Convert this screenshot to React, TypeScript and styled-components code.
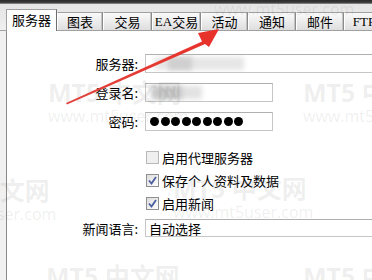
import React from "react";
import styled, { createGlobalStyle } from "styled-components";

const GlobalStyle = createGlobalStyle`
  html, body {
    margin: 0;
    padding: 0;
    background: #f0f0f0;
  }
  body {
    font-family: "Noto Sans CJK SC", "DejaVu Sans", sans-serif;
    font-size: 13px;
    color: #000;
  }
`;

/* -------------------- WINDOW / TABS -------------------- */
const Window = styled.div`
  position: relative;
  width: 372px;
  height: 280px;
  overflow: hidden;
  background: #f0f0f0;
  display: flex;
  flex-direction: column;
`;

const TitleEdge = styled.div`
  height: 4px;
  background: linear-gradient(to bottom, #2a2a2a 0%, #3a3a3a 60%, #9a9a9a 100%);
`;

const TabStrip = styled.div`
  height: 26px;
  display: flex;
  align-items: flex-end;
  padding-left: 6px;
  border-bottom: 1px solid #a0a0a0;
  background: linear-gradient(to bottom, #e4e4e4, #f0f0f0);
`;

const Tab = styled.div<{ $w: number; $active?: boolean }>`
  box-sizing: border-box;
  width: ${(p) => p.$w}px;
  flex: none;
  height: ${(p) => (p.$active ? 22 : 18)}px;
  margin-bottom: ${(p) => (p.$active ? -1 : 0)}px;
  display: flex;
  align-items: center;
  justify-content: center;
  line-height: 1;
  font-size: 13px;
  white-space: nowrap;
  background: ${(p) =>
    p.$active ? "#ffffff" : "linear-gradient(to bottom, #fafafa, #dedede)"};
  border-top: 1px solid #a0a0a0;
  border-left: 1px solid ${(p) => (p.$active ? "#a0a0a0" : "#ffffff")};
  border-right: 1px solid ${(p) => (p.$active ? "#6e6e6e" : "#8a8a8a")};
  box-shadow: ${(p) => (p.$active ? "none" : "inset -1px 0 0 #c4c4c4")};
  padding-bottom: ${(p) => (p.$active ? 3 : 0)}px;
`;

const Latin = styled.span`
  font-family: "Liberation Serif", serif;
  font-size: 13px;
`;

const Panel = styled.div`
  flex: 1;
  margin-left: 6px;
  border-left: 1px solid #8a8a8a;
  background: #ffffff;
  padding-top: 23px;
  display: flex;
  flex-direction: column;
`;

/* -------------------- FORM -------------------- */
const Row = styled.div<{ $top: number; $h: number }>`
  display: flex;
  align-items: center;
  margin-top: ${(p) => p.$top}px;
  height: ${(p) => p.$h}px;
  white-space: nowrap;
`;

const Label = styled.div`
  width: 131px;
  text-align: right;
  padding-right: 7px;
  flex: none;
`;

const Field = styled.div<{ $w: number }>`
  position: relative;
  box-sizing: border-box;
  width: ${(p) => p.$w}px;
  height: 100%;
  flex: none;
  border: 1px solid #c6c6c6;
  border-top-color: #b0b0b0;
  background: #fff;
  display: flex;
  align-items: center;
  padding-left: 3px;
  overflow: hidden;
`;

const Smudge = styled.div<{ $x: number; $w: number; $c: string }>`
  position: absolute;
  left: ${(p) => p.$x}px;
  top: 2px;
  width: ${(p) => p.$w}px;
  height: 13px;
  background: ${(p) => p.$c};
  filter: blur(2.5px);
`;

const Dots = styled.div`
  display: flex;
  gap: 1.5px;
  padding-left: 1px;
`;

const Dot = styled.span`
  width: 9px;
  height: 9px;
  border-radius: 50%;
  background: #000;
`;

const CheckRow = styled.label`
  display: flex;
  align-items: center;
  gap: 3px;
  margin-left: 1px;
`;

const Box = styled.span<{ $disabled?: boolean }>`
  box-sizing: border-box;
  width: 13px;
  height: 13px;
  border: 1px solid ${(p) => (p.$disabled ? "#b8b8b8" : "#8e8f8f")};
  background: ${(p) =>
    p.$disabled ? "#efefef" : "linear-gradient(135deg, #dcdcdc, #ffffff)"};
  display: flex;
  align-items: center;
  justify-content: center;
`;

/* -------------------- OVERLAYS -------------------- */
const Mark = styled.div<{ $x: number; $y: number }>`
  position: absolute;
  left: ${(p) => p.$x}px;
  top: ${(p) => p.$y}px;
  pointer-events: none;
  color: rgba(90, 90, 90, 0.1);
  font-family: "Open Sans", "Noto Sans CJK SC", sans-serif;
  white-space: nowrap;
  line-height: 1;
`;

const MarkBig = styled.div`
  font-size: 25px;
  font-weight: 700;
`;

const MarkSmall = styled.div`
  font-size: 16px;
  margin-top: 3px;
`;

const ArrowLayer = styled.svg`
  position: absolute;
  left: 0;
  top: 0;
  pointer-events: none;
`;

const tabs = [
  { label: "服务器", w: 51 },
  { label: "图表", w: 46 },
  { label: "交易", w: 49 },
  { label: "EA交易", w: 49, latin: "EA" },
  { label: "活动", w: 47 },
  { label: "通知", w: 48 },
  { label: "邮件", w: 48 },
  { label: "FTP", w: 40, latin: "FTP" },
];

const Watermark = ({ x, y, small }: { x: number; y: number; small?: boolean }) => (
  <Mark $x={x} $y={y}>
    {!small && <MarkBig>MT5 中文网</MarkBig>}
    <MarkSmall>www.mt5user.com</MarkSmall>
  </Mark>
);

const Check = ({ checked, disabled }: { checked?: boolean; disabled?: boolean }) => (
  <Box $disabled={disabled}>
    {checked && (
      <svg width="9" height="9" viewBox="0 0 9 9">
        <path d="M1 4.5 L3.5 7.5 L8 1" fill="none" stroke="#4a5d9e" strokeWidth="1.8" />
      </svg>
    )}
  </Box>
);

export default function App() {
  return (
    <>
      <GlobalStyle />
      <Window>
        <TitleEdge />
        <TabStrip>
          {tabs.map((t, i) => (
            <Tab key={t.label} $w={t.w} $active={i === 0}>
              {t.latin === "FTP" ? (
                <Latin>FTP</Latin>
              ) : t.latin ? (
                <>
                  <Latin>{t.latin}</Latin>
                  {t.label.slice(t.latin.length)}
                </>
              ) : (
                t.label
              )}
            </Tab>
          ))}
        </TabStrip>
        <Panel>
          <Row $top={0} $h={19}>
            <Label>服务器:</Label>
            <Field $w={260}>
              <Smudge $x={8} $w={90} $c="#e6e6e6" />
              <Smudge $x={22} $w={24} $c="#cfcfcf" />
            </Field>
          </Row>
          <Row $top={10} $h={19}>
            <Label>登录名:</Label>
            <Field $w={128}>
              <Smudge $x={6} $w={50} $c="#e2e2e2" />
              <Smudge $x={6} $w={30} $c="#c8c8c8" />
            </Field>
          </Row>
          <Row $top={10} $h={19}>
            <Label>密码:</Label>
            <Field $w={128}>
              <Dots>
                {Array.from({ length: 9 }).map((_, i) => (
                  <Dot key={i} />
                ))}
              </Dots>
            </Field>
          </Row>
          <Row $top={15} $h={23}>
            <Label />
            <CheckRow>
              <Check disabled />
              启用代理服务器
            </CheckRow>
          </Row>
          <Row $top={0} $h={23}>
            <Label />
            <CheckRow>
              <Check checked />
              保存个人资料及数据
            </CheckRow>
          </Row>
          <Row $top={0} $h={23}>
            <Label />
            <CheckRow>
              <Check checked />
              启用新闻
            </CheckRow>
          </Row>
          <Row $top={4} $h={18}>
            <Label>新闻语言:</Label>
            <Field $w={260}>自动选择</Field>
          </Row>
        </Panel>

        <Watermark x={214} y={-2} small />
        <Watermark x={48} y={80} />
        <Watermark x={303} y={80} />
        <Watermark x={-84} y={178} />
        <Watermark x={173} y={176} />
        <Watermark x={46} y={264} />
        <Watermark x={303} y={264} />

        <ArrowLayer width="372" height="280" viewBox="0 0 372 280">
          <defs>
            <linearGradient id="arrowGrad" x1="67" y1="102" x2="218" y2="30" gradientUnits="userSpaceOnUse">
              <stop offset="0" stopColor="#e0453d" />
              <stop offset="1" stopColor="#e8302a" />
            </linearGradient>
          </defs>
          <path
            d="M66 103 L202 41.5 L198 33 L219 29 L209 47 L205 44 L67 104.5 Z"
            fill="url(#arrowGrad)"
          />
        </ArrowLayer>
      </Window>
    </>
  );
}
